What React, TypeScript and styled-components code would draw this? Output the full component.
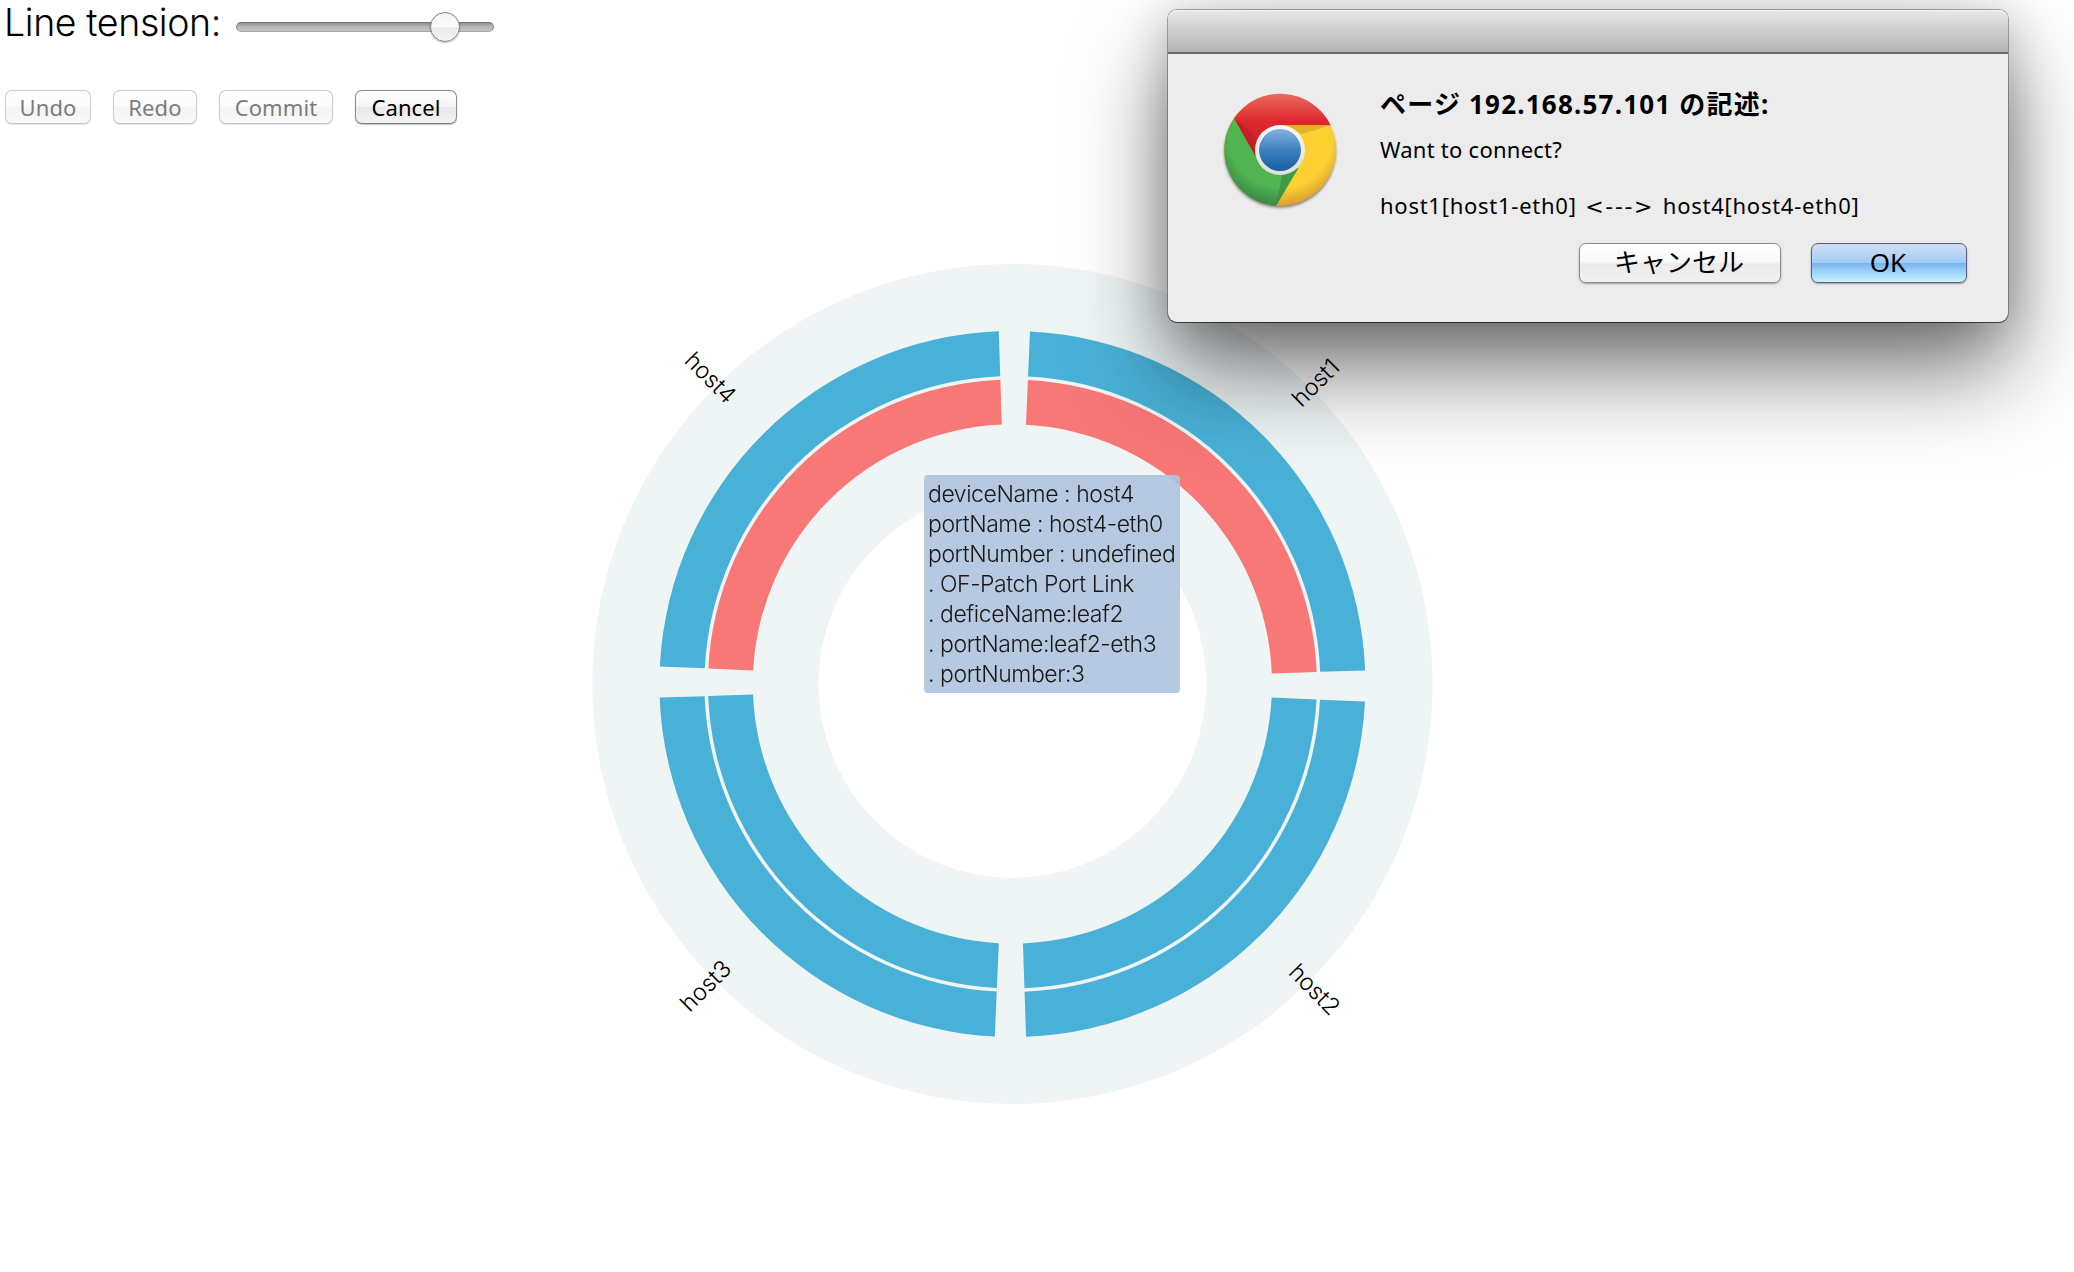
import React from 'react';
import styled, { createGlobalStyle, css } from 'styled-components';

const Global = createGlobalStyle`
  html, body { margin: 0; padding: 0; background: #fff; }
  * { box-sizing: border-box; }
`;

const thin = `Inter, "Liberation Sans", sans-serif`;
const ui = `"Noto Sans", "Noto Sans CJK JP", sans-serif`;

const Page = styled.main`
  position: relative;
  display: flex;
  flex-direction: column;
  width: 2074px;
  height: 1272px;
  overflow: hidden;
  background: #fff;
  font-family: ${thin};
  color: #000;
`;

const TensionRow = styled.div`
  display: flex;
  align-items: center;
  gap: 16px;
  height: 54px;
  padding-left: 4px;
`;

const TensionLabel = styled.label`
  width: 216px;
  height: 46px;
  margin-top: -9px;
  font-size: 37.5px;
  font-weight: 300;
  line-height: 46px;
  letter-spacing: -0.38px;
  white-space: nowrap;
`;

const Track = styled.div`
  display: flex;
  align-items: center;
  width: 258px;
  height: 10px;
  border-radius: 5px;
  border: 1px solid #8c8c8c;
  border-top-color: #747474;
  border-bottom-color: #a8a8a8;
  background: linear-gradient(#939393, #b6b6b6 45%, #c4c4c4);
`;

const Knob = styled.div`
  width: 30px;
  height: 30px;
  margin-left: 193px;
  border: 1.5px solid #858585;
  border-radius: 50%;
  background: linear-gradient(#f4f4f4 0%, #fbfbfb 48%, #ececec 52%, #f3f3f3 100%);
  box-shadow: 0 1px 2px rgba(0, 0, 0, 0.25);
`;

const Actions = styled.div`
  display: flex;
  gap: 22px;
  margin-top: 36px;
  padding-left: 5px;
`;

const ActionButton = styled.button<{ $w: number }>`
  display: flex;
  align-items: center;
  justify-content: center;
  width: ${(p) => p.$w}px;
  height: 34px;
  padding: 0 0 1px;
  border: 1px solid #8f8f8f;
  border-bottom-color: #7f7f7f;
  border-radius: 7px;
  background: linear-gradient(#fff 0%, #f6f6f6 48%, #eaeaea 52%, #f3f3f3 100%);
  box-shadow: 0 1px 1px rgba(0, 0, 0, 0.2), 0 0 1px rgba(0, 0, 0, 0.3);
  font-family: ${ui};
  font-size: 22px;
  font-weight: 450;
  line-height: 30px;
  letter-spacing: 0.1px;
  color: #000;
  &:disabled {
    color: #7c7c7c;
    border-color: #cdcdcd;
    border-bottom-color: #c4c4c4;
    background: linear-gradient(#fff 0%, #fbfbfb 48%, #f4f4f4 52%, #f9f9f9 100%);
    box-shadow: 0 1px 1px rgba(0, 0, 0, 0.1), 0 0 1px rgba(0, 0, 0, 0.15);
  }
`;

const ChartArea = styled.section`
  position: relative;
  width: 880px;
  height: 880px;
  margin: 120px 0 0 572px;
`;

const Chart = styled.svg`
  display: block;
  width: 880px;
  height: 880px;
`;

const HostLabel = styled.text`
  font-family: ${thin};
  font-size: 23.5px;
  font-weight: 300;
  letter-spacing: -0.1px;
`;

const Tooltip = styled.div`
  position: absolute;
  left: 352px;
  top: 231px;
  width: 256px;
  height: 218px;
  padding: 4px;
  border-radius: 4px;
  background: lightsteelblue;
  opacity: 0.9;
  font-size: 23px;
  font-weight: 300;
  line-height: 30px;
  letter-spacing: -0.45px;
  white-space: nowrap;
`;

const Dialog = styled.div`
  position: absolute;
  left: 1168px;
  top: 10px;
  display: flex;
  flex-direction: column;
  width: 840px;
  height: 312px;
  border-radius: 9px;
  background: #ececec;
  box-shadow: 0 0 0 1px rgba(0, 0, 0, 0.3), 0 1px 0 0 rgba(0, 0, 0, 0.45),
    0 50px 92px rgba(0, 0, 0, 0.52), 0 6px 50px rgba(0, 0, 0, 0.22);
`;

const TitleBar = styled.div`
  height: 44px;
  border-radius: 9px 9px 0 0;
  border-bottom: 2px solid #696969;
  background: linear-gradient(#e8e8e8, #b3b3b3);
  box-shadow: inset 0 1px 0 #f2f2f2;
`;

const DialogBody = styled.div`
  display: flex;
  flex: 1;
  padding: 28px 41px 0 52px;
`;

const Logo = styled.svg`
  display: block;
  width: 120px;
  height: 124px;
  margin-top: 8px;
`;

const DialogContent = styled.div`
  display: flex;
  flex-direction: column;
  flex: 1;
  padding-left: 40px;
  font-family: ${ui};
`;

const Heading = styled.h1`
  margin: 0;
  height: 53px;
  font-size: 26px;
  font-weight: 700;
  line-height: 44px;
  letter-spacing: 1.2px;
  white-space: nowrap;
`;

const Message = styled.p<{ $wide?: boolean }>`
  margin: 0;
  height: 28px;
  font-size: 22px;
  line-height: 28px;
  white-space: pre;
  letter-spacing: ${(p) => (p.$wide ? '0.74px' : '0.25px')};
`;

const Arrow = styled.span`
  font-family: "DejaVu Sans", sans-serif;
  line-height: 20px;
  letter-spacing: 1.65px;
`;

const DialogButtons = styled.div`
  display: flex;
  justify-content: flex-end;
  gap: 30px;
  margin-top: 24px;
`;

const DialogButton = styled.button<{ $primary?: boolean }>`
  display: flex;
  align-items: center;
  justify-content: center;
  width: ${(p) => (p.$primary ? 156 : 202)}px;
  height: 40px;
  padding: 0 2px 2px 0;
  border: 1px solid #8a8a8a;
  border-radius: 7px;
  background: linear-gradient(#fff 0%, #f8f8f8 48%, #ebebeb 52%, #f1f1f1 100%);
  box-shadow: 0 1px 2px rgba(0, 0, 0, 0.35);
  font-family: ${ui};
  font-size: 26px;
  font-weight: 400;
  line-height: 36px;
  color: #000;
  ${(p) =>
    p.$primary &&
    css`
      border-color: #5d5d84;
      background: linear-gradient(#cfe0f6 0%, #a3cbf3 49%, #78b5f0 51%, #a3d9fb 78%, #c8f2fd 100%);
    `}
`;

/* Every quarter starts and ends at a small distance from its axis. */
function quarterPath(inner: number, outer: number) {
  const start = (r: number) => 13.6 + (r - 260) * 0.043;
  const end = (r: number) => 10.6 + (r - 260) * 0.0323;
  const side = (r: number, d: number) => Math.sqrt(r * r - d * d);
  const a = start(outer);
  const b = end(outer);
  const c = end(inner);
  const d = start(inner);
  return `M${a},${-side(outer, a)}A${outer},${outer} 0 0 1 ${side(outer, b)},${-b}L${side(inner, c)},${-c}A${inner},${inner} 0 0 0 ${d},${-side(inner, d)}Z`;
}

const BLUE = '#49b1d8';
const RED = '#f87777';

const hosts = [
  { name: 'host1', turn: 0, port: RED, x: 289, y: -276, tilt: -44.7 },
  { name: 'host2', turn: 90, port: BLUE, x: 275, y: 289.4, tilt: 45.3 },
  { name: 'host3', turn: 180, port: BLUE, x: -322.6, y: 329, tilt: -44.7 },
  { name: 'host4', turn: 270, port: RED, x: -329.2, y: -322.3, tilt: 45.3 },
];

const details = [
  'deviceName : host4',
  'portName : host4-eth0',
  'portNumber : undefined',
  '. OF-Patch Port Link',
  '. deficeName:leaf2',
  '. portName:leaf2-eth3',
  '. portNumber:3',
];

function BrowserLogo() {
  return (
    <Logo viewBox="-60 -60 120 124">
      <defs>
        <linearGradient id="red" x1="0" y1="0" x2="0" y2="1">
          <stop offset="0" stopColor="#ea6a5c" />
          <stop offset="0.45" stopColor="#dd262e" />
          <stop offset="1" stopColor="#d2222b" />
        </linearGradient>
        <linearGradient id="blue" x1="0" y1="0" x2="0" y2="1">
          <stop offset="0" stopColor="#83b2de" />
          <stop offset="0.5" stopColor="#3d80c2" />
          <stop offset="1" stopColor="#1a5f9c" />
        </linearGradient>
        <linearGradient id="rim" x1="0" y1="0" x2="0" y2="1">
          <stop offset="0" stopColor="#fafafa" />
          <stop offset="1" stopColor="#dcdfe0" />
        </linearGradient>
        <radialGradient id="yellow" gradientUnits="userSpaceOnUse" cx="0" cy="-14" r="71">
          <stop offset="0.74" stopColor="#fbd030" />
          <stop offset="1" stopColor="#d99a35" />
        </radialGradient>
        <radialGradient id="green" gradientUnits="userSpaceOnUse" cx="0" cy="-14" r="71">
          <stop offset="0.72" stopColor="#50b450" />
          <stop offset="1" stopColor="#37854a" />
        </radialGradient>
        <linearGradient id="redFold" gradientUnits="userSpaceOnUse" x1="-37" y1="-13" x2="-24" y2="-20">
          <stop offset="0" stopColor="#8d1015" stopOpacity="0.4" />
          <stop offset="1" stopColor="#8d1015" stopOpacity="0.05" />
        </linearGradient>
        <filter id="drop" x="-20%" y="-20%" width="140%" height="140%">
          <feGaussianBlur stdDeviation="1.8" />
        </filter>
      </defs>
      <circle cy="2" r="55.5" fill="#000" opacity="0.5" filter="url(#drop)" />
      <circle r="56" fill="url(#yellow)" />
      <path d="M-46,-31.7A56,56 0 0 0 -4,55.8L18.3,18.3L0,0L-24.3,6.7Z" fill="url(#green)" />
      <path d="M18.3,18.3L-4,55.8L2,26Z" fill="#348c3c" opacity="0.6" />
      <path d="M-46,-31.7A56,56 0 0 1 50.7,-24.7L0,-24.7L0,0L-24.3,6.7Z" fill="url(#red)" />
      <path d="M-46,-31.7L-24.3,6.7L-22,-12Z" fill="url(#redFold)" />
      <path d="M0,-24.7H50.7L22,-16Z" fill="#d9a628" opacity="0.7" />
      <circle r="25" fill="url(#rim)" />
      <circle r="21" fill="url(#blue)" />
    </Logo>
  );
}

export default function App() {
  return (
    <Page>
      <Global />
      <TensionRow>
        <TensionLabel>Line tension:</TensionLabel>
        <Track>
          <Knob />
        </Track>
      </TensionRow>
      <Actions>
        <ActionButton $w={86} disabled>Undo</ActionButton>
        <ActionButton $w={84} disabled>Redo</ActionButton>
        <ActionButton $w={114} disabled>Commit</ActionButton>
        <ActionButton $w={102}>Cancel</ActionButton>
      </Actions>
      <ChartArea>
        <Chart viewBox="-440.4 -440 880 880">
          <circle r="307" fill="none" stroke="#eff5f5" strokeWidth="226.2" />
          {hosts.map((h) => (
            <g key={h.name} transform={`rotate(${h.turn})`}>
              <path d={quarterPath(308, 353)} fill={BLUE} />
              <path d={quarterPath(259.6, 304.5)} fill={h.port} />
            </g>
          ))}
          {hosts.map((h) => (
            <HostLabel key={h.name} transform={`translate(${h.x},${h.y}) rotate(${h.tilt})`}>
              {h.name}
            </HostLabel>
          ))}
        </Chart>
        <Tooltip>
          {details.map((line) => (
            <div key={line}>{line}</div>
          ))}
        </Tooltip>
      </ChartArea>
      <Dialog role="dialog">
        <TitleBar />
        <DialogBody>
          <BrowserLogo />
          <DialogContent>
            <Heading>ページ 192.168.57.101 の記述:</Heading>
            <Message>Want to connect?</Message>
            <Message> </Message>
            <Message $wide>
              host1[host1-eth0]
              <Arrow>{' <---> '}</Arrow>
              host4[host4-eth0]
            </Message>
            <DialogButtons>
              <DialogButton>キャンセル</DialogButton>
              <DialogButton $primary>OK</DialogButton>
            </DialogButtons>
          </DialogContent>
        </DialogBody>
      </Dialog>
    </Page>
  );
}
